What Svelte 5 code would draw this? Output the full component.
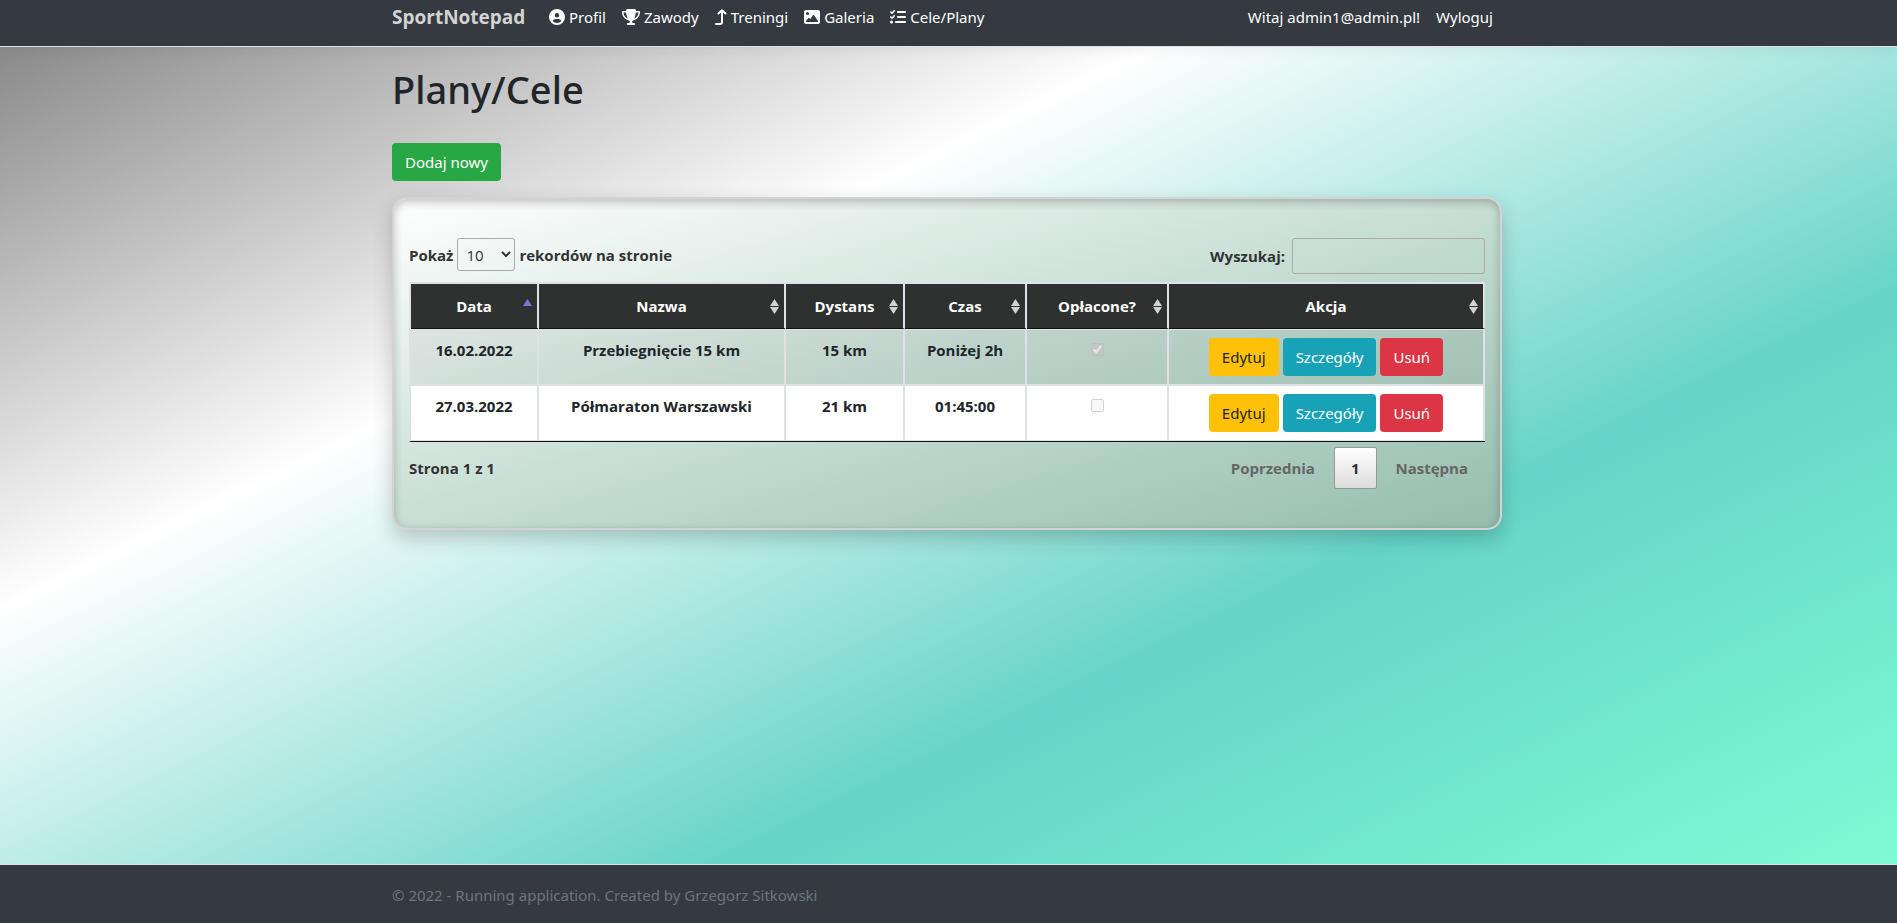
<script>
  const icons = {
    user: { w: 512, d: 'M399 384.2C376.9 345.8 335.4 320 288 320H224c-47.4 0-88.9 25.8-111 64.2c35.2 39.2 86.2 63.8 143 63.8s107.8-24.7 143-63.8zM0 256a256 256 0 1 1 512 0A256 256 0 1 1 0 256zm256 16a72 72 0 1 0 0-144 72 72 0 1 0 0 144z' },
    trophy: { w: 576, d: 'M400 0H176c-26.5 0-48.1 21.8-47.1 48.2c.2 5.3 .4 10.6 .7 15.8H24C10.7 64 0 74.7 0 88c0 92.6 33.5 157 78.5 200.7c44.3 43.1 98.3 64.8 138.1 75.8c23.4 6.5 39.4 26 39.4 45.6c0 20.9-17 37.9-37.9 37.9H192c-17.7 0-32 14.3-32 32s14.3 32 32 32H384c17.7 0 32-14.3 32-32s-14.3-32-32-32H357.9C337 448 320 431 320 410.1c0-19.6 15.9-39.2 39.4-45.6c39.9-11 93.9-32.7 138.2-75.8C542.5 245 576 180.6 576 88c0-13.3-10.7-24-24-24H446.4c.3-5.2 .5-10.4 .7-15.8C448.1 21.8 426.5 0 400 0zM48.9 112h84.4c9.1 90.1 29.2 150.3 51.9 190.6c-24.9-11-50.8-26.5-73.2-48.3c-32-31.1-58-76-63-142.3zM464.1 254.3c-22.4 21.8-48.3 37.3-73.2 48.3c22.7-40.3 42.8-100.5 51.9-190.6h84.4c-5.1 66.3-31.1 111.2-63 142.3z' },
    turnUp: { w: 384, line: true, d: 'M32 480H160c35 0 64-29 64-64V48M112 144L224 40L336 144' },
    image: { w: 512, d: 'M0 96C0 60.7 28.7 32 64 32H448c35.3 0 64 28.7 64 64V416c0 35.3-28.7 64-64 64H64c-35.3 0-64-28.7-64-64V96zM323.8 202.5c-4.5-6.6-11.9-10.5-19.8-10.5s-15.4 3.9-19.8 10.5l-87 127.6L170.7 297c-4.6-5.7-11.5-9-18.7-9s-14.2 3.3-18.7 9l-64 80c-5.8 7.2-6.9 17.1-2.9 25.4s12.4 13.6 21.6 13.6h96 32H424c8.9 0 17.1-4.9 21.2-12.8s3.6-17.4-1.4-24.7l-120-176zM112 192a48 48 0 1 0 0-96 48 48 0 1 0 0 96z' },
    list: { w: 512, d: 'M152.1 38.2c9.9 8.9 10.7 24 1.8 33.9l-72 80c-4.4 4.9-10.6 7.8-17.2 7.9s-12.9-2.4-17.6-7L7 113C-2.3 103.6-2.3 88.4 7 79s24.6-9.4 33.9 0l22.1 22.1 55.1-61.2c8.9-9.9 24-10.7 33.9-1.8zm0 160c9.9 8.9 10.7 24 1.8 33.9l-72 80c-4.4 4.9-10.6 7.8-17.2 7.9s-12.9-2.4-17.6-7L7 273c-9.4-9.4-9.4-24.6 0-33.9s24.6-9.4 33.9 0l22.1 22.1 55.1-61.2c8.9-9.9 24-10.7 33.9-1.8zM224 96c0-17.7 14.3-32 32-32H480c17.7 0 32 14.3 32 32s-14.3 32-32 32H256c-17.7 0-32-14.3-32-32zm0 160c0-17.7 14.3-32 32-32H480c17.7 0 32 14.3 32 32s-14.3 32-32 32H256c-17.7 0-32-14.3-32-32zM160 416c0-17.7 14.3-32 32-32H480c17.7 0 32 14.3 32 32s-14.3 32-32 32H192c-17.7 0-32-14.3-32-32zM48 368a48 48 0 1 1 0 96 48 48 0 1 1 0-96z' }
  };

  const nav = [
    { label: 'Profil', icon: icons.user },
    { label: 'Zawody', icon: icons.trophy },
    { label: 'Treningi', icon: icons.turnUp },
    { label: 'Galeria', icon: icons.image },
    { label: 'Cele/Plany', icon: icons.list }
  ];

  const columns = [
    { label: 'Data', share: 128, sorted: true },
    { label: 'Nazwa', share: 247 },
    { label: 'Dystans', share: 119 },
    { label: 'Czas', share: 122 },
    { label: 'Opłacone?', share: 142 },
    { label: 'Akcja', share: 316 }
  ];
  const total = columns.reduce((sum, c) => sum + c.share, 0);

  const rows = [
    { date: '16.02.2022', name: 'Przebiegnięcie 15 km', distance: '15 km', time: 'Poniżej 2h', paid: true },
    { date: '27.03.2022', name: 'Półmaraton Warszawski', distance: '21 km', time: '01:45:00', paid: false }
  ];
</script>

<div class="page">
  <header>
    <nav class="container">
      <a class="brand" href="#home">SportNotepad</a>
      <ul class="links">
        {#each nav as item}
          <li>
            <a href="#{item.label}">
              <svg class:line={item.icon.line} width={item.icon.w / 32} height="16" viewBox="0 0 {item.icon.w} 512" aria-hidden="true"><path d={item.icon.d} /></svg>
              {item.label}
            </a>
          </li>
        {/each}
      </ul>
      <div class="account">
        <a href="#account">Witaj admin1@admin.pl!</a>
        <button type="button">Wyloguj</button>
      </div>
    </nav>
  </header>

  <main class="container">
    <h1>Plany/Cele</h1>
    <a class="btn green" href="#new">Dodaj nowy</a>

    <section class="card">
      <div class="bar">
        <label>
          Pokaż
          <select>
            <option>10</option>
            <option>25</option>
            <option>50</option>
          </select>
          rekordów na stronie
        </label>
        <label class="search">Wyszukaj: <input type="search" /></label>
      </div>

      <table>
        <colgroup>
          {#each columns as c}<col style="width: {(c.share / total) * 100}%" />{/each}
        </colgroup>
        <thead>
          <tr>
            {#each columns as c}
              <th scope="col">
                <div class="head">
                  {c.label}
                  <svg class="sort" class:asc={c.sorted} width="9" height="15" viewBox="0 0 9 15" aria-hidden="true">
                    <path d="M0 7L4.5 0L9 7z" />
                    {#if !c.sorted}<path d="M0 8L4.5 15L9 8z" />{/if}
                  </svg>
                </div>
              </th>
            {/each}
          </tr>
        </thead>
        <tbody>
          {#each rows as r}
            <tr>
              <td>{r.date}</td>
              <td>{r.name}</td>
              <td>{r.distance}</td>
              <td>{r.time}</td>
              <td><input type="checkbox" checked={r.paid} disabled aria-label="Opłacone" /></td>
              <td>
                <div class="actions">
                  <a class="btn yellow" href="#edit">Edytuj</a>
                  <a class="btn teal" href="#details">Szczegóły</a>
                  <a class="btn red" href="#delete">Usuń</a>
                </div>
              </td>
            </tr>
          {/each}
        </tbody>
      </table>

      <div class="foot">
        <span>Strona 1 z 1</span>
        <div class="pager">
          <button type="button" disabled>Poprzednia</button>
          <button type="button" class="current">1</button>
          <button type="button" disabled>Następna</button>
        </div>
      </div>
    </section>
  </main>

  <footer>
    <div class="container">© 2022 - Running application. Created by Grzegorz Sitkowski</div>
  </footer>
</div>

<style>
  :global(body) {
    margin: 0;
  }
  .page {
    min-height: 100vh;
    display: flex;
    flex-direction: column;
    font: 15px/24px 'Segoe UI', 'Noto Sans', sans-serif;
    color: #212529;
    background: linear-gradient(to bottom right, #808080, #ffffff 33%, #66d4c8 66%, #80ffd5);
  }
  .page * {
    box-sizing: border-box;
  }
  a {
    color: inherit;
    text-decoration: none;
  }
  button,
  input,
  select {
    font: inherit;
    color: inherit;
    margin: 0;
  }
  .container {
    width: 100%;
    max-width: 1113px;
    margin: 0 auto;
    padding-right: 3px;
  }
  header {
    background: #343a40;
    border-bottom: 1px solid #dee2e6;
    box-shadow: 0 4px 12px rgba(0, 0, 0, 0.05);
    color: #fff;
  }
  nav {
    display: flex;
    align-items: center;
    height: 46px;
    padding-bottom: 12px;
  }
  .brand {
    font-family: 'Segoe UI', 'Open Sans', sans-serif;
    font-size: 19px;
    font-weight: 700;
    color: #d3d3d3;
    width: 157px;
  }
  .links {
    display: flex;
    gap: 16px;
    list-style: none;
    margin: 0;
    padding: 0;
  }
  .links a {
    display: flex;
    align-items: center;
    gap: 4px;
  }
  .links svg {
    fill: #fff;
  }
  .links svg.line {
    fill: none;
    stroke: #fff;
    stroke-width: 64;
    stroke-linecap: round;
    stroke-linejoin: round;
  }
  .account {
    display: flex;
    gap: 16px;
    margin-left: auto;
    padding-right: 9px;
  }
  .account button {
    border: 0;
    padding: 0;
    background: none;
  }
  main {
    flex: 1;
    padding-top: 18px;
  }
  h1 {
    margin: 0 0 30px;
    font-size: 38px;
    line-height: 48px;
    font-weight: 500;
  }
  .btn {
    display: inline-block;
    padding: 7px 13px;
    border-radius: 4px;
    font-family: 'Segoe UI', 'Noto Sans', sans-serif;
    font-weight: 400;
    color: #fff;
  }
  .green {
    background: #28a745;
  }
  .yellow {
    background: #ffc107;
    color: #212529;
  }
  .teal {
    background: #17a2b8;
  }
  .red {
    background: #dc3545;
  }
  .card {
    margin-top: 16px;
    padding: 39px 15px;
    border: 2px solid #d3d3d3;
    border-radius: 15px;
    background: linear-gradient(to bottom right, #ffffff, #c5ddd3 52%, #95bdae);
    box-shadow: 0 8px 20px rgba(0, 0, 0, 0.2), inset 0 3px 10px rgba(0, 0, 0, 0.24);
    font-family: 'Segoe UI', 'Open Sans', sans-serif;
    font-weight: 700;
  }
  .bar,
  .foot {
    display: flex;
    justify-content: space-between;
    color: #333;
  }
  .bar {
    height: 44px;
    align-items: flex-start;
  }
  .bar label {
    display: flex;
    align-items: center;
    gap: 4px;
  }
  .bar .search {
    gap: 7px;
  }
  select {
    width: 58px;
    height: 33px;
    padding: 4px;
    border: 1px solid #aaa;
    border-radius: 3px;
    background: transparent;
    font-weight: 400;
  }
  .search input {
    width: 193px;
    height: 36px;
    padding: 5px;
    border: 1px solid #aaa;
    border-radius: 3px;
    background: transparent;
  }
  table {
    width: 100%;
    table-layout: fixed;
    border-collapse: separate;
    border-spacing: 0;
    border: solid #dee2e6;
    border-width: 2px 0 0 2px;
    border-bottom: 1px solid #111;
    text-align: center;
  }
  th {
    padding: 10px 0;
    background: #2f3030;
    color: #fff;
    border-right: 2px solid #dee2e6;
    border-bottom: 1px solid #111;
  }
  .head {
    position: relative;
  }
  .sort {
    position: absolute;
    right: 5px;
    top: 5px;
    fill: #d3d3d3;
  }
  .sort.asc {
    fill: #7878db;
  }
  td {
    padding: 8px 10px;
    vertical-align: top;
    border-right: 2px solid #dee2e6;
    border-bottom: 2px solid #dee2e6;
  }
  tbody tr:first-child td {
    border-top: 1px solid #dee2e6;
  }
  tbody tr:last-child td {
    border-bottom-width: 1px;
  }
  tbody tr:nth-child(odd) {
    background: rgba(0, 0, 0, 0.05);
  }
  tbody tr:nth-child(even) {
    background: #fff;
  }
  td input {
    width: 13px;
    height: 13px;
  }
  .actions {
    display: flex;
    justify-content: center;
    gap: 4px;
  }
  .foot {
    padding-top: 5px;
    align-items: center;
  }
  .pager {
    display: flex;
    gap: 2px;
  }
  .pager button {
    padding: 8px 16px;
    border: 1px solid transparent;
    border-radius: 2px;
    background: none;
    color: #666;
  }
  .pager .current {
    color: #333;
    border-color: #979797;
    background: linear-gradient(#fff, #dcdcdc);
  }
  footer {
    border-top: 1px solid #dee2e6;
    background: #343a40;
    color: #6c757d;
    padding-top: 2px;
    line-height: 56px;
  }
</style>
